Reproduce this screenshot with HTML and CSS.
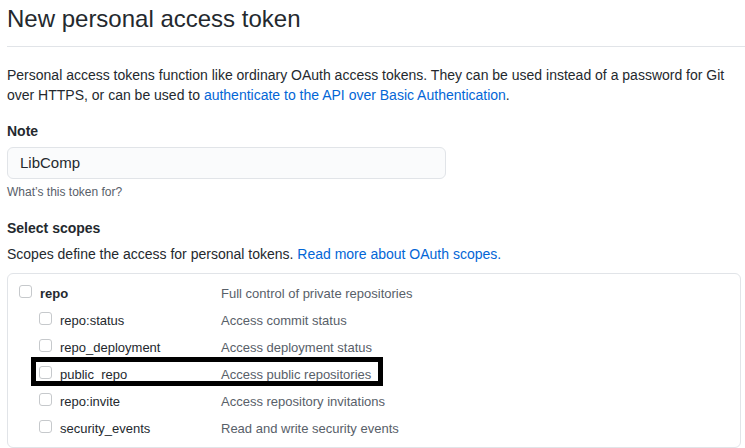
FILE: index.html
```html
<!DOCTYPE html>
<html>
<head>
<meta charset="utf-8">
<link rel="stylesheet" href="styles.css">
</head>
<body>
<div class="page">
  <div class="subhead">
    <h2 class="subhead-heading">New personal access token</h2>
  </div>
  <p class="intro">Personal access tokens function like ordinary OAuth access tokens. They can be used instead of a password for Git over HTTPS, or can be used to <a href="#">authenticate to the API over Basic Authentication</a>.</p>

  <div class="form-group">
    <label class="label">Note</label>
    <div class="input">LibComp</div>
    <p class="note">What’s this token for?</p>
  </div>

  <div class="form-group scopes-group">
    <label class="label">Select scopes</label>
    <p class="scopes-desc">Scopes define the access for personal tokens. <a href="#">Read more about OAuth scopes.</a></p>
    <div class="scopes">
      <div class="row parent">
        <span class="cb"></span><span class="name">repo</span><span class="desc">Full control of private repositories</span>
      </div>
      <div class="row child">
        <span class="cb"></span><span class="name">repo:status</span><span class="desc">Access commit status</span>
      </div>
      <div class="row child">
        <span class="cb"></span><span class="name">repo_deployment</span><span class="desc">Access deployment status</span>
      </div>
      <div class="row child">
        <span class="cb"></span><span class="name">public_repo</span><span class="desc">Access public repositories</span>
        <span class="highlight"></span>
      </div>
      <div class="row child">
        <span class="cb"></span><span class="name">repo:invite</span><span class="desc">Access repository invitations</span>
      </div>
      <div class="row child">
        <span class="cb"></span><span class="name">security_events</span><span class="desc">Read and write security events</span>
      </div>
    </div>
  </div>
</div>
</body>
</html>
```

FILE: styles.css
```css
html, body {
  margin: 0;
  padding: 0;
  background: #fff;
}
body {
  font-family: "Liberation Sans", Arial, sans-serif;
  font-size: 14px;
  line-height: 1.5;
  color: #24292e;
}
.page {
  padding: 0 0 0 7px;
}
.subhead {
  border-bottom: 1px solid #e1e4e8;
  padding-top: 4px;
  padding-bottom: 12px;
  margin-bottom: 18px;
}
.subhead-heading {
  margin: 0;
  font-size: 24px;
  font-weight: 400;
  line-height: 1.25;
}
.intro {
  margin: 0 0 16px 0;
  line-height: 20px;
  padding-right: 10px;
}
a {
  color: #0366d6;
  text-decoration: none;
}
.form-group {
  margin-bottom: 17px;
}
.label {
  display: block;
  font-weight: bold;
  margin: 0 0 5px 0;
}
.input {
  width: 439px;
  box-sizing: border-box;
  height: 32px;
  padding: 0 12px;
  line-height: 30px;
  font-size: 15px;
  background: #fafbfc;
  border: 1px solid #e1e4e8;
  border-radius: 6px;
  color: #24292e;
}
.note {
  margin: 4px 0 0;
  font-size: 12px;
  color: #586069;
  line-height: 18px;
}
.scopes-desc {
  margin: 0 0 8px;
}
.scopes {
  margin-right: 4px;
  border: 1px solid #e1e4e8;
  border-radius: 6px;
  padding: 6px 0 5px;
}
.row {
  position: relative;
  display: flex;
  align-items: center;
  height: 27px;
  font-size: 13px;
}
.row.parent {
  padding-left: 11px;
}
.row.child {
  padding-left: 31px;
}
.cb {
  width: 11px;
  height: 11px;
  border: 1px solid #c6c9cc;
  border-radius: 3px;
  background: #fff;
  margin-right: 8px;
  margin-top: -5px;
  flex: none;
}
.parent .name {
  font-weight: bold;
  width: 181px;
}
.child .name {
  width: 161px;
}
.desc {
  color: #586069;
}
.highlight {
  position: absolute;
  left: 23px;
  top: -4px;
  width: 342px;
  height: 19px;
  border: 5px solid #000;
  pointer-events: none;
}
```
